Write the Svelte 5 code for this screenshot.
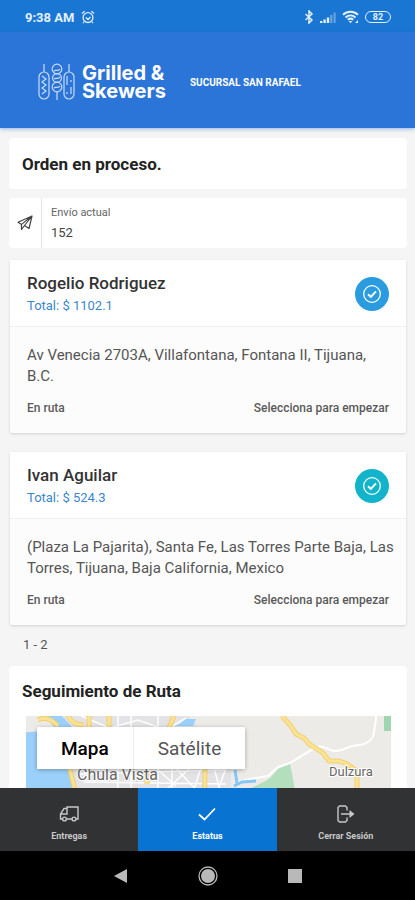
<script>
	let currentTab = 'estatus';
	let mapType = 'mapa';

	const brand = 'Grilled &\nSkewers';
	const envio = '152';

	const orders = [
		{
			name: 'Rogelio Rodriguez',
			total: '1102.1',
			address: 'Av Venecia 2703A, Villafontana, Fontana II, Tijuana, B.C.',
			status: 'En ruta',
			color: 'blue'
		},
		{
			name: 'Ivan Aguilar',
			total: '524.3',
			address: '(Plaza La Pajarita), Santa Fe, Las Torres Parte Baja, Las Torres, Tijuana, Baja California, Mexico',
			status: 'En ruta',
			color: 'cyan'
		}
	];

	const tabs = [
		{ id: 'entregas', label: 'Entregas' },
		{ id: 'estatus', label: 'Estatus' },
		{ id: 'salir', label: 'Cerrar Sesión' }
	];

	// main roads, drawn twice: a darker casing and a lighter fill
	const roads =
		'M12 4c8-4 14 0 20 6M42 0c3 6 9 9 16 9M43 50l5 20 8 70M63 0v12M83 0v12M148 0l-5 12M121 56v12M179 50l-1 90' +
		'M256 0l9 10 5 8 8 4 5 6 8 5 6 4 6 8h10l8 3 10 7v90';
</script>

<div class="app">
	<div class="status-bar">
		<span class="time">9:38 AM</span>
		<svg width="14" height="14" viewBox="0 0 14 14" fill="none" stroke="currentColor" stroke-width="1.3">
			<circle cx="7" cy="7.6" r="4.9" />
			<path d="M4.8 7.5 7 9.500l2.500-2.500M1 3.4 3.6 1.2M13 3.4 10.4 1.2M3 12l-1 1.2M11 12l1 1.2" />
		</svg>
		<div class="status-icons">
			<svg width="10" height="14" viewBox="0 0 10 14" fill="none" stroke="currentColor" stroke-width="1.5">
				<path d="M1.5 4 8 10 5 13V1l3 3-6.5 6" />
			</svg>
			<svg width="16" height="13" viewBox="0 0 16 13" fill="currentColor">
				<path d="M0 10h2.4v2H0zM3.4 8.5h2.4V12H3.4zM6.8 6.5h2.4V12H6.8z" />
				<path d="M10.2 4h2.2v8h-2.2zM13.6 1.5h2V12h-2z" opacity="0.4" />
			</svg>
			<svg width="17" height="14" viewBox="0 0 17 14" fill="none" stroke="currentColor" stroke-width="2">
				<path d="M1 4.8C5.4.8 11.6.8 16 4.8M3.5 7.4c3-2.6 7-2.6 10 0M5.8 9.8c1.6-1.4 3.8-1.4 5.4 0" />
				<path d="M8.5 13.2 6.7 11h3.6zM13 13h3v-3z" fill="currentColor" stroke="none" />
			</svg>
			<span class="battery">82</span>
		</div>
	</div>

	<header>
		<div class="logo">
			<svg width="38" height="38" viewBox="0 0 38 38" fill="none" stroke="currentColor" stroke-width="1.2">
				<path d="M6 1v8M31 1v8M19 29v8" />
				<rect x="1" y="9" width="10" height="27" rx="5" />
				<path d="m4 13 4 3-4 3 4 3-4 3 4 3-4 3" />
				<circle cx="19" cy="6" r="4.8" />
				<circle cx="19" cy="15" r="4.4" />
				<circle cx="19" cy="24" r="4.8" />
				<path d="M16 8c2-2 4 1 6-2M16 16c2-2 4 1 6-2M16 25c2-2 4 1 6-2" />
				<rect x="26" y="9" width="10" height="27" rx="5" />
				<path d="M29 13v9M33 17v2M33 24v7M29 29v2" />
			</svg>
			<span class="brand">{brand}</span>
		</div>
		<span class="branch">SUCURSAL SAN RAFAEL</span>
	</header>

	<main>
		<h1 class="panel title">Orden en proceso.</h1>

		<div class="shipment">
			<div class="shipment-icon">
				<svg width="16" height="16" viewBox="0 0 16 16" fill="none" stroke="currentColor" stroke-width="1.2" stroke-linejoin="round">
					<path d="M15 1 1 7.2l3.5 2.2L15 1l-3 12.500-4.500-3L15 1M4.5 9.4V14.500l3-4" />
				</svg>
			</div>
			<div class="shipment-field">
				<label for="envio">Envío actual</label>
				<input id="envio" type="text" value={envio} readonly />
			</div>
		</div>

		{#each orders as order}
			<article class="order">
				<div class="order-head">
					<div>
						<h2>{order.name}</h2>
						<p class="total">Total: $ {order.total}</p>
					</div>
					<button class="check {order.color}" aria-label="Completar pedido">
						<svg width="20" height="20" viewBox="0 0 20 20" fill="none" stroke="currentColor" stroke-width="1.3">
							<circle cx="10" cy="10" r="8.3" />
							<path d="m6 10.3 2.8 2.7L14 7.3" stroke-width="1.9" />
						</svg>
					</button>
				</div>
				<div class="order-body">
					<p class="address">{order.address}</p>
					<div class="order-foot">
						<span>{order.status}</span>
						<span>Selecciona para empezar</span>
					</div>
				</div>
			</article>
		{/each}

		<p class="pages">1 - 2</p>

		<section class="panel tracking">
			<h2 class="title">Seguimiento de Ruta</h2>
			<div class="map">
				<svg class="map-canvas" viewBox="0 0 365 140" preserveAspectRatio="xMinYMin slice">
					<rect width="365" height="140" fill="#ecebe8" />
					<path d="M38 0H162L205 50V140H60L44 60z" fill="#e3e3e6" />
					<path d="M0 16C8 17 14 12 20 22L40 48 50 70V140H0zM19 0H36L46 11H28z" fill="#9bd0fa" />
					<path d="M147 10c6-1 9-3 11-7h12l-3 7z" fill="#9bd0fa" />
					<g fill="none" stroke="#fff" stroke-width="1.5">
						<path d="M55 0 84 12 112 4 140 14 160 2M92 0v140M105 0v140M132 0v140M146 0v140M52 58 200 54M58 66 200 68" />
						<path d="m130 52 20 18M140 74 164 52M150 52l20 22M176 48l-8 26M188 52l6 22M200 52l-8 22" />
						<path d="M212 66 224 63 242 60 252 51 264 47C276 40 284 34 292 31c6-3 9 4 17 4 9 0 14-6 25-6 10-2 14-8 14-14 1-6 2-10 2-15" stroke-width="2" />
					</g>
					<path d="M365 0H358V15H365z" fill="#9fd6b0" />
					<path d="M222 75c6-6 16-8 22-13l8-9 12-5 2 9 3 18z" fill="#b4dfbd" />
					<path d={roads} fill="none" stroke="#f1cf70" stroke-width="5" />
					<path d={roads} fill="none" stroke="#fbe394" stroke-width="3" />
					<path d="m209 54 2 13M208 70l8-4 14-1" fill="none" stroke="#86c7f5" stroke-width="3" />
					<g class="map-labels">
						<text x="51" y="64">Chula Vista</text>
						<text x="303" y="60" font-size="13">Dulzura</text>
					</g>
				</svg>
				<div class="map-types">
					<button class:selected={mapType === 'mapa'} on:click={() => (mapType = 'mapa')}>Mapa</button>
					<button class:selected={mapType === 'satelite'} on:click={() => (mapType = 'satelite')}>Satélite</button>
				</div>
			</div>
		</section>
	</main>

	<nav class="tabs">
		{#each tabs as tab}
			<button class:active={currentTab === tab.id} on:click={() => (currentTab = tab.id)}>
				<svg width="20" height="20" viewBox="0 0 20 20" fill="none" stroke="currentColor" stroke-width="1.4">
					{#if tab.id === 'entregas'}
						<path d="M8 15h5M3.5 15H1.5v-5L5 4.5h3V3H19v12h-2M1.5 10H8V4.5" />
						<circle cx="5.5" cy="15" r="1.9" />
						<circle cx="15" cy="15" r="1.9" />
					{:else if tab.id === 'estatus'}
						<path d="m2 10.500 5.500 5L18 4.500" stroke-width="1.8" />
					{:else}
						<path d="M11 6.5V3.5L9.5 2h-6L2 3.5v13L3.5 18h6l1.500-1.500v-3M5 10H17" />
						<path d="M13.5 6 18.5 10l-5 4z" fill="currentColor" stroke="none" />
					{/if}
				</svg>
				<span>{tab.label}</span>
			</button>
		{/each}
	</nav>

	<div class="system-nav">
		<button aria-label="Atrás">
			<svg width="20" height="20" viewBox="0 0 20 20"><path d="M16 3v14L3 10z" fill="currentColor" /></svg>
		</button>
		<button aria-label="Inicio">
			<svg width="20" height="20" viewBox="0 0 20 20">
				<circle cx="10" cy="10" r="9" fill="none" stroke="currentColor" stroke-width="1.3" />
				<circle cx="10" cy="10" r="7" fill="currentColor" />
			</svg>
		</button>
		<button aria-label="Recientes">
			<svg width="20" height="20" viewBox="0 0 20 20"><rect x="3" y="3" width="14" height="14" fill="currentColor" /></svg>
		</button>
	</div>
</div>

<style>
	:global(body) {
		margin: 0;
		background: #f5f5f5;
	}
	.app {
		display: flex;
		flex-direction: column;
		height: 100vh;
		font-family: Roboto, sans-serif;
		color: #333;
		background: #f5f5f5;
	}
	h1,
	h2,
	p {
		margin: 0;
	}
	button {
		font-family: inherit;
		border: none;
		padding: 0;
		cursor: pointer;
	}
	svg {
		display: block;
	}
	.status-bar {
		display: flex;
		align-items: center;
		gap: 7px;
		padding: 2px 24px 0 25px;
		height: 30px;
		flex-shrink: 0;
		background: #1976d2;
		color: #e3effb;
	}
	.time {
		font-size: 13px;
		font-weight: 700;
	}
	.status-icons {
		display: flex;
		align-items: center;
		gap: 6px;
		margin-left: auto;
	}
	.battery {
		box-sizing: border-box;
		width: 26px;
		height: 12px;
		border: 1px solid currentColor;
		border-radius: 6px;
		font-size: 9px;
		font-weight: 700;
		line-height: 10px;
		text-align: center;
	}
	header {
		display: flex;
		align-items: center;
		gap: 24px;
		padding: 4px 38px 0;
		height: 92px;
		flex-shrink: 0;
		background: #2b74d8;
		color: white;
		box-shadow: 0 1px 4px rgba(43, 116, 216, 0.5);
		z-index: 1;
	}
	.logo {
		display: flex;
		align-items: center;
		gap: 6px;
	}
	.logo svg {
		color: #c9dcf6;
	}
	.brand {
		font-family: Inter, sans-serif;
		font-size: 20px;
		font-weight: 700;
		line-height: 18px;
		white-space: pre;
	}
	.branch {
		font-size: 10px;
		font-weight: 700;
		white-space: nowrap;
	}
	main {
		flex: 1;
		min-height: 0;
		overflow: hidden;
		padding: 10px 8px 0 9px;
	}
	.panel {
		background: white;
		border-radius: 4px;
	}
	.title {
		font-size: 17px;
		font-weight: 700;
		line-height: 20px;
		color: #222;
	}
	h1.panel {
		padding: 16px 13px 15px;
	}
	.shipment {
		display: flex;
		margin-top: 9px;
		background: white;
		border-radius: 4px;
	}
	.shipment-icon {
		display: flex;
		align-items: center;
		justify-content: center;
		width: 32px;
		border-right: 1px solid #e4e4e4;
		color: #444;
	}
	.shipment-field {
		flex: 1;
		padding: 5px 9px 6px;
	}
	.shipment-field label {
		display: block;
		font-size: 11px;
		line-height: 19px;
		color: #666;
	}
	.shipment-field input {
		display: block;
		width: 100%;
		height: 20px;
		padding: 0;
		border: none;
		outline: none;
		background: none;
		font-family: inherit;
		font-size: 13px;
		color: #444;
	}
	.order {
		margin: 0 1px 19px;
		background: #fcfcfc;
		border-radius: 2px;
		box-shadow: 0 1px 3px rgba(0, 0, 0, 0.14);
	}
	.shipment + .order {
		margin-top: 12px;
	}
	.order-head {
		display: flex;
		align-items: center;
		justify-content: space-between;
		padding: 11px 17px 10px;
		background: white;
		border-bottom: 1px solid #f2f2f2;
	}
	.order h2 {
		font-size: 17px;
		font-weight: 500;
		line-height: 24px;
		color: #333;
	}
	.total {
		font-size: 13px;
		line-height: 21px;
		color: #3c86d0;
	}
	.check {
		display: flex;
		align-items: center;
		justify-content: center;
		width: 34px;
		height: 34px;
		border-radius: 50%;
		color: white;
	}
	.check.blue {
		background: #2b9be0;
	}
	.check.cyan {
		background: #11b4ca;
	}
	.order-body {
		padding: 18px 11px 17px 17px;
	}
	.address {
		font-size: 15px;
		line-height: 21px;
		color: #555;
	}
	.order-foot {
		display: flex;
		justify-content: space-between;
		margin-top: 13px;
		padding-right: 6px;
		font-size: 12px;
		font-weight: 500;
		line-height: 16px;
		color: #5a5a5a;
	}
	.pages {
		padding: 0 14px;
		font-size: 13px;
		line-height: 20px;
		color: #555;
	}
	.order + .pages {
		margin-top: -9px;
	}
	.tracking {
		margin-top: 11px;
		padding: 15px 16px 16px 17px;
	}
	.tracking .title {
		margin-left: -4px;
	}
	.map {
		position: relative;
		margin-top: 15px;
	}
	.map-canvas {
		width: 100%;
	}
	.map-labels {
		font-size: 16px;
		fill: #666;
		stroke: white;
		stroke-width: 2px;
		paint-order: stroke;
	}
	.map-types {
		position: absolute;
		top: 11px;
		left: 11px;
		display: flex;
		background: white;
		border-radius: 2px;
		box-shadow: 0 1px 4px rgba(0, 0, 0, 0.3);
	}
	.map-types button {
		height: 42px;
		padding: 0 24px;
		background: white;
		font-size: 19px;
		color: #555;
	}
	.map-types button + button {
		border-left: 1px solid #eee;
	}
	.map-types .selected {
		font-weight: 500;
		color: black;
	}
	.tabs {
		display: flex;
		flex-shrink: 0;
	}
	.tabs button {
		flex: 1;
		display: flex;
		flex-direction: column;
		align-items: center;
		gap: 7px;
		padding: 16px 0 9px;
		background: #303234;
		color: #c8c8c8;
		font-size: 9px;
		font-weight: 700;
		line-height: 11px;
	}
	.tabs .active {
		background: #0873d1;
		color: white;
	}
	.system-nav {
		display: flex;
		align-items: center;
		justify-content: center;
		gap: 67px;
		height: 49px;
		flex-shrink: 0;
		background: black;
	}
	.system-nav button {
		background: none;
		color: #b9b9b9;
	}
</style>
